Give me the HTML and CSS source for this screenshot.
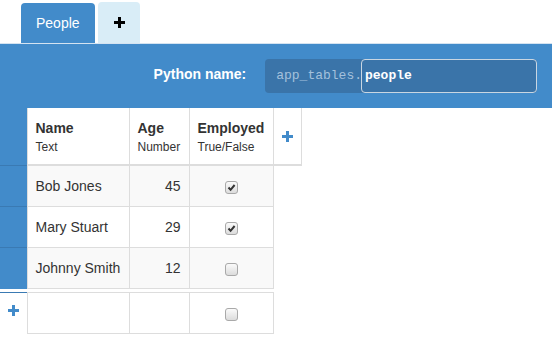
FILE: index.html
```html
<!DOCTYPE html>
<html>
<head>
    <title>People</title>
    <link rel="stylesheet" href="styles.css">
</head>
<body>
    <div class="tab-titles">
        <div class="tab-title active">People</div>
        <div class="tab-title add-tab">
            <svg class="plus" width="11" height="11" viewBox="0 0 11 11"><rect x="4" y="0" width="3" height="11"/><rect x="0" y="4" width="11" height="3"/></svg>
        </div>
    </div>

    <div class="table-bar">
        <span class="python-label">Python name:</span>
        <div class="python-name">
            <span class="python-prefix">app_tables.</span>
            <span class="python-input">people</span>
        </div>
    </div>

    <table class="data-table">
        <colgroup>
            <col style="width: 27px">
            <col style="width: 102px">
            <col style="width: 60px">
            <col style="width: 84px">
            <col style="width: 28px">
        </colgroup>
        <thead>
            <tr>
                <th class="gutter"></th>
                <th>Name<small>Text</small></th>
                <th>Age<small>Number</small></th>
                <th>Employed<small>True/False</small></th>
                <th class="add-column">
                    <svg class="plus blue" width="11" height="11" viewBox="0 0 11 11"><rect x="4" y="0" width="3" height="11"/><rect x="0" y="4" width="11" height="3"/></svg>
                </th>
            </tr>
        </thead>
        <tbody>
            <tr class="striped">
                <td class="gutter"></td>
                <td>Bob Jones</td>
                <td class="num">45</td>
                <td class="check"><span class="checkbox"><svg width="11" height="11" viewBox="0 0 11 11"><path d="M2.5 5.5 L4.6 7.8 L8.6 3" /></svg></span></td>
            </tr>
            <tr>
                <td class="gutter"></td>
                <td>Mary Stuart</td>
                <td class="num">29</td>
                <td class="check"><span class="checkbox"><svg width="11" height="11" viewBox="0 0 11 11"><path d="M2.5 5.5 L4.6 7.8 L8.6 3" /></svg></span></td>
            </tr>
            <tr class="striped">
                <td class="gutter"></td>
                <td>Johnny Smith</td>
                <td class="num">12</td>
                <td class="check"><span class="checkbox"></span></td>
            </tr>
        </tbody>
    </table>

    <table class="data-table new-row">
        <colgroup>
            <col style="width: 27px">
            <col style="width: 102px">
            <col style="width: 60px">
            <col style="width: 84px">
        </colgroup>
        <tbody>
            <tr>
                <td class="gutter add-row">
                    <svg class="plus blue" width="11" height="11" viewBox="0 0 11 11"><rect x="4" y="0" width="3" height="11"/><rect x="0" y="4" width="11" height="3"/></svg>
                </td>
                <td></td>
                <td></td>
                <td class="check"><span class="checkbox"></span></td>
            </tr>
        </tbody>
    </table>
</body>
</html>
```

FILE: styles.css
```css
        body {
            font-family: "Liberation Sans", Arial, sans-serif;
            font-size: 14px;
            color: #333;
            margin: 0;
            padding: 0;
        }

        /* tabs */
        .tab-titles {
            display: flex;
            align-items: flex-end;
            height: 43px;
            padding-left: 21px;
        }

        .tab-title {
            line-height: 20px;
            padding: 10px 15px;
            margin-right: 3px;
            border-radius: 4px 4px 0 0;
        }

        .tab-title.active {
            background-color: #428bca;
            color: #fff;
        }

        .add-tab {
            background-color: #d9edf7;
            padding: 15px 15px 15px 16px;
        }

        .plus {
            display: block;
            fill: #000;
        }

        .plus.blue {
            fill: #428bca;
        }

        /* blue bar with the python name */
        .table-bar {
            background-color: #428bca;
            border-top: 1px solid #d4e3f1;
            padding: 15px 15px 15px 0;
            display: flex;
            justify-content: flex-end;
            align-items: center;
        }

        .python-label {
            color: #fff;
            font-weight: bold;
            margin-right: 19px;
            padding-bottom: 4px;
        }

        .python-name {
            display: flex;
            height: 34px;
            background-color: #3a74a9;
            border-radius: 4px;
            font-family: "Liberation Mono", "Courier New", monospace;
            font-size: 13px;
        }

        .python-prefix {
            color: #a4c1dc;
            padding-left: 11px;
            line-height: 34px;
        }

        .python-input {
            width: 171px;
            border: 1px solid #c9d6e2;
            border-radius: 4px;
            color: #fff;
            font-weight: bold;
            line-height: 32px;
            padding-left: 3px;
            margin-left: -1px;
        }

        /* the table */
        .data-table {
            border-collapse: collapse;
            table-layout: fixed;
            width: 301px;
        }

        .data-table th,
        .data-table td {
            border: 1px solid #ddd;
            padding: 10px 8px;
            line-height: 20px;
            text-align: left;
            white-space: nowrap;
            overflow: hidden;
        }

        .data-table th {
            padding: 10px 8px 8px 8px;
            border-top: none;
            border-bottom: 2px solid #ddd;
            background-color: #fff;
        }

        .data-table th small {
            display: block;
            font-size: 12px;
            font-weight: normal;
            line-height: 18px;
        }

        .data-table .gutter {
            background-color: #428bca;
            border: none;
            padding: 0;
        }

        .data-table tbody .gutter {
            border-top: 1px solid #3a7ab3;
        }

        .data-table .add-column {
            padding: 0 8px;
            vertical-align: middle;
        }

        .striped td {
            background-color: #f9f9f9;
        }

        .data-table td.num {
            text-align: right;
        }

        .data-table td.check {
            text-align: center;
            vertical-align: middle;
        }

        .checkbox {
            display: inline-block;
            vertical-align: middle;
            width: 11px;
            height: 11px;
            border: 1px solid #a9a9a9;
            border-radius: 3px;
            background: linear-gradient(#fafafa, #dcdcdc);
        }

        .checkbox svg {
            display: block;
            fill: none;
            stroke: #333;
            stroke-width: 2;
        }

        /* the row for adding a record */
        .new-row {
            width: 273px;
            margin-top: 3px;
        }

        .new-row td {
            border-top: 1px solid #ddd;
        }

        .data-table .add-row {
            background-color: #fff;
            border: none;
            border-right: 1px solid #ddd;
            padding: 0 0 5px 8px;
            vertical-align: middle;
        }
```
